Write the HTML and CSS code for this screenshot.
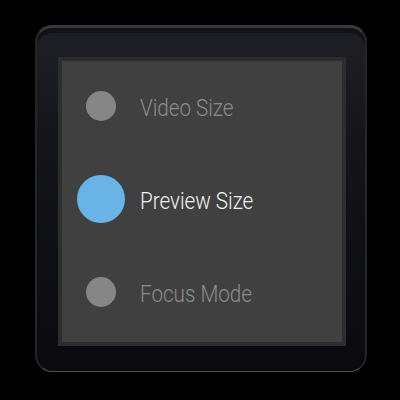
FILE: index.html
```html
<!DOCTYPE html>
<html lang="en">
<head>
    <meta charset="UTF-8">
    <meta name="viewport" content="width=device-width, initial-scale=1.0">
    <title>Camera Settings</title>
    <link rel="stylesheet" href="styles.css">
</head>
<body>
    <div class="watch">
        <div class="screen-frame">
            <div class="screen">
                <div class="menu-item">
                    <span class="dot-slot"><span class="dot"></span></span>
                    <span class="label">Video Size</span>
                </div>
                <div class="menu-item active">
                    <span class="dot-slot"><span class="dot"></span></span>
                    <span class="label">Preview Size</span>
                </div>
                <div class="menu-item">
                    <span class="dot-slot"><span class="dot"></span></span>
                    <span class="label">Focus Mode</span>
                </div>
            </div>
        </div>
    </div>
</body>
</html>
```

FILE: styles.css
```css
body {
    margin: 0;
    width: 400px;
    height: 400px;
    background: #000;
    font-family: Roboto, "Noto Sans", sans-serif;
    overflow: hidden;
}
.watch {
    margin: 25px 0 0 35px;
    width: 332px;
    height: 347px;
    box-sizing: border-box;
    padding: 29px 19px 25px 21px;
    border-radius: 17px;
    background: linear-gradient(to bottom, #1f2025 0%, #15161a 30%, #0e0f13 70%, #0b0b0f 100%);
    border-top: 3px solid #37383c;
    border-left: 2px solid #25262a;
    border-right: 2px solid #25262a;
    border-bottom: 1px solid #505155;
    box-shadow: inset 0 5px 0 #111215, inset 0 7px 0 #1c1d21;
}
.screen-frame {
    width: 288px;
    height: 289px;
    box-sizing: border-box;
    padding: 4px;
    background: #2d2d2e;
}
.screen {
    height: 100%;
    box-sizing: border-box;
    padding-top: 1px;
    background: #404040;
    display: flex;
    flex-direction: column;
    gap: 5px;
}
.menu-item {
    height: 88px;
    flex-shrink: 0;
    display: flex;
    align-items: center;
    padding-left: 15px;
}
.dot-slot {
    width: 48px;
    height: 48px;
    display: flex;
    align-items: center;
    justify-content: center;
    margin-right: 15px;
}
.dot {
    width: 30px;
    height: 30px;
    border-radius: 50%;
    background: #868686;
}
.label {
    margin-top: 3px;
    font-size: 24px;
    font-weight: 300;
    color: #8c8c8c;
    transform: scaleX(0.86);
    transform-origin: left center;
    white-space: nowrap;
}
.active .dot {
    width: 48px;
    height: 48px;
    background: #6ab3e6;
}
.active .label {
    color: #f2f2f2;
}
```
